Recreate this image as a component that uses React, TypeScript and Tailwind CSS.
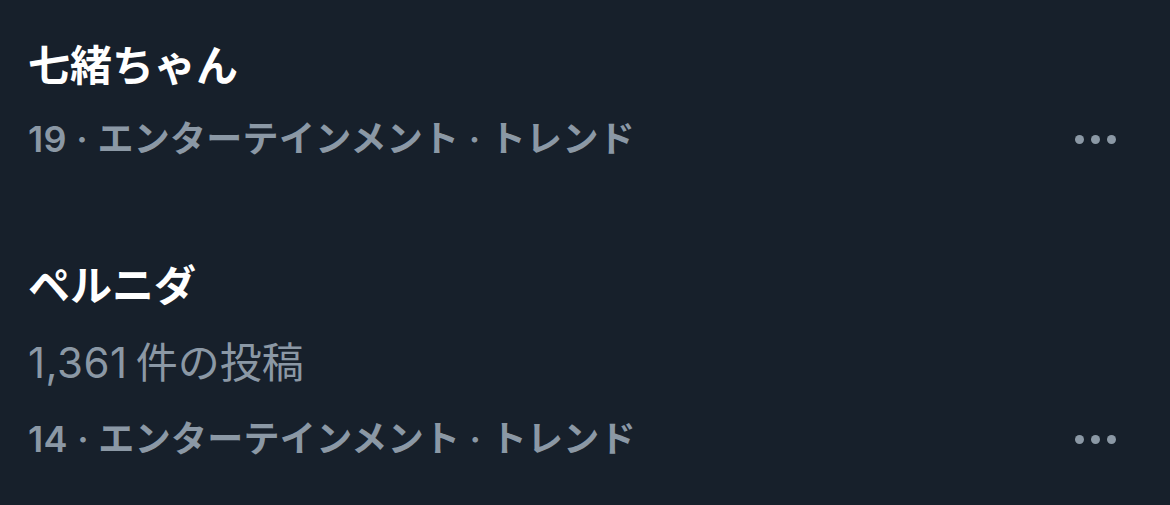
import React from "react";

const font = { fontFamily: '"Inter", "Noto Sans CJK JP", sans-serif' };

function Dots() {
  return (
    <div className="flex items-center gap-[7px]">
      <span className="block w-[9px] h-[9px] rounded-full bg-[#8b98a5]" />
      <span className="block w-[9px] h-[9px] rounded-full bg-[#8b98a5]" />
      <span className="block w-[9px] h-[9px] rounded-full bg-[#8b98a5]" />
    </div>
  );
}

function Meta({ rank }: { rank: string }) {
  return (
    <div className="flex items-center justify-between h-[52px] pr-[54px]">
      <span className="text-[36px] leading-[52px] font-semibold tracking-[0.3px] text-[#8b98a5]">
        {rank} · エンターテインメント · トレンド
      </span>
      <Dots />
    </div>
  );
}

export default function App() {
  return (
    <div
      className="w-[1170px] h-[505px] bg-[#17202b] pl-[28px] pt-[40px] overflow-hidden"
      style={font}
    >
      <div>
        <div className="h-[52px] text-[42px] leading-[52px] font-bold text-white">七緒ちゃん</div>
        <div className="mt-[21px]">
          <Meta rank="19" />
        </div>
      </div>
      <div className="mt-[95px]">
        <div className="h-[52px] text-[42px] leading-[52px] font-bold text-white">ペルニダ</div>
        <div className="mt-[25px] h-[52px] leading-[52px] text-[#8b98a5]">
          <span className="text-[42px] tracking-[0.5px]">1,361</span>
          <span className="text-[42px] ml-[8px]">件の投稿</span>
        </div>
        <div className="mt-[24px]">
          <Meta rank="14" />
        </div>
      </div>
    </div>
  );
}
